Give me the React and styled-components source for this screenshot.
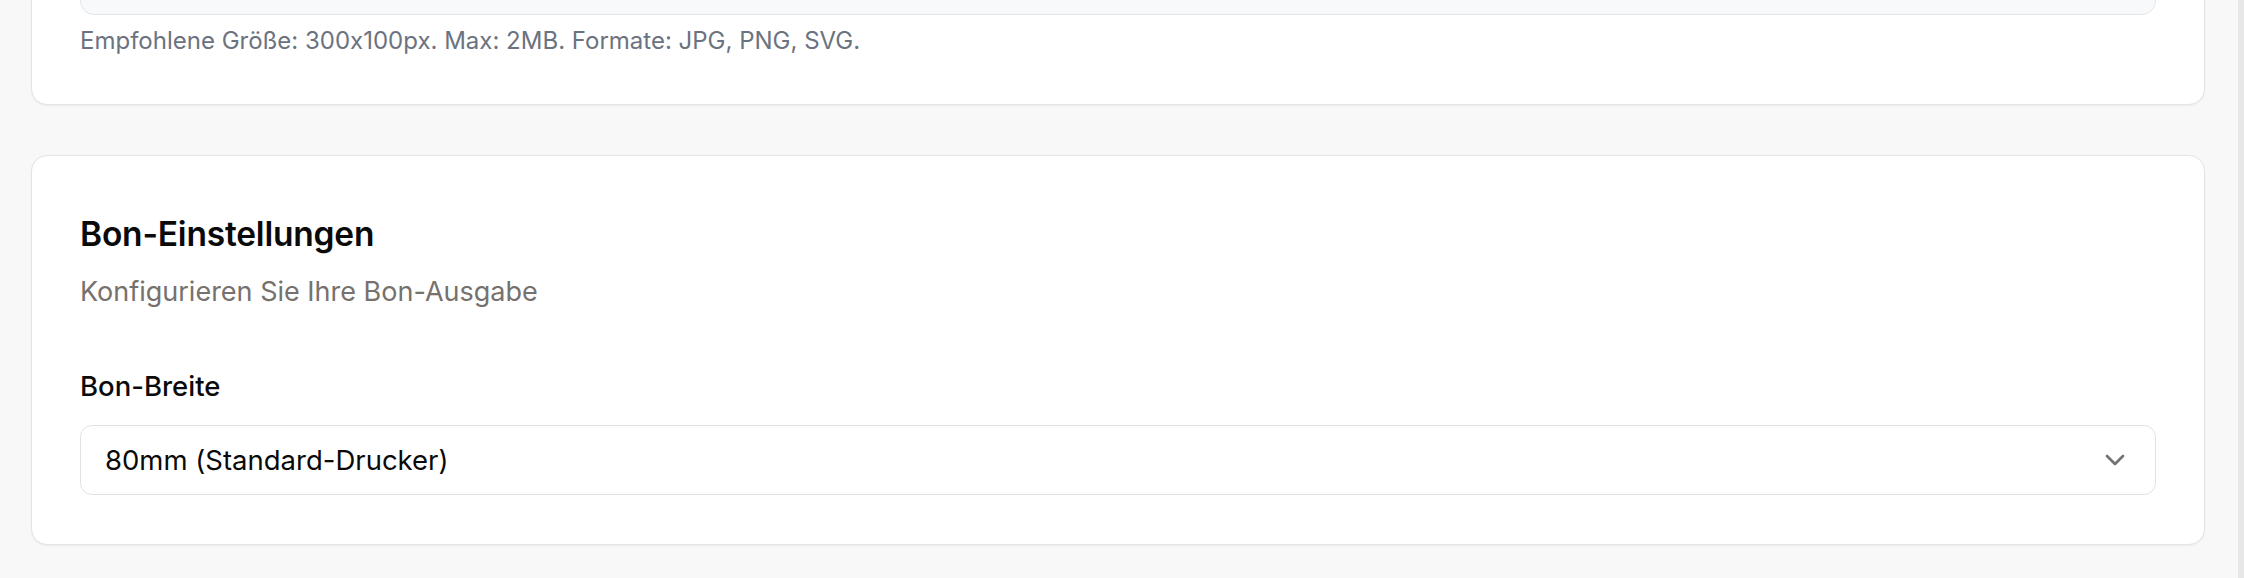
import React from "react";
import styled, { createGlobalStyle } from "styled-components";
import { ChevronDown } from "lucide-react";

const Global = createGlobalStyle`
  html, body { margin: 0; padding: 0; background: #f8f8f8; }
  body {
    font-family: Inter, "Noto Sans", "Liberation Sans", sans-serif;
    font-feature-settings: "calt" 0;
    overflow: hidden;
  }
  * { box-sizing: border-box; }
`;

const Viewport = styled.div`
  display: flex;
  height: 578px;
  overflow: hidden;
`;

const Main = styled.main`
  flex: 1;
  min-width: 0;
  padding: 0 33px 0 31px;
`;

const ScrollTrack = styled.div`
  width: 6px;
  flex: none;
  background: #e7e7e7;
`;

const Column = styled.div`
  display: flex;
  flex-direction: column;
  gap: 50px;
  margin-top: -154px;
`;

const Card = styled.section`
  background: #ffffff;
  border: 1px solid #e4e4e4;
  border-radius: 16px;
  box-shadow: 0 1px 2px rgba(0, 0, 0, 0.05);
  padding: ${(p) => p.$pad || "48px"};
  display: flex;
  flex-direction: column;
`;

const UploadBox = styled.div`
  height: 120px;
  background: #f8f9fb;
  border: 1px solid #e3e5e9;
  border-radius: 14px;
`;

const Hint = styled.p`
  margin: 10px 0 0;
  font-size: 24px;
  line-height: 31px;
  color: #6b7280;
`;

const Title = styled.h2`
  margin: 0;
  font-size: 33.5px;
  line-height: 40px;
  font-weight: 600;
  color: #0a0a0a;
  letter-spacing: -0.2px;
`;

const Subtitle = styled.p`
  margin: 20px 0 0;
  font-size: 27px;
  line-height: 36px;
  color: #77716d;
`;

const Field = styled.div`
  display: flex;
  flex-direction: column;
  gap: 21px;
  margin-top: 58px;
`;

const Label = styled.label`
  font-size: 27.5px;
  line-height: 36px;
  font-weight: 500;
  color: #0a0a0a;
`;

const Select = styled.div`
  height: 70px;
  display: flex;
  align-items: center;
  justify-content: space-between;
  padding: 0 24px;
  border: 1px solid #e2e2e2;
  border-radius: 12px;
  background: #ffffff;
`;

const SelectValue = styled.span`
  font-size: 27.5px;
  line-height: 34px;
  color: #0a0a0a;
`;

const Chevron = styled(ChevronDown)`
  color: #737373;
  flex: none;
`;

export default function App() {
  return (
    <>
      <Global />
      <Viewport>
        <Main>
          <Column>
            <Card>
              <UploadBox />
              <Hint>Empfohlene Größe: 300x100px. Max: 2MB. Formate: JPG, PNG, SVG.</Hint>
            </Card>
            <Card $pad="58px 48px 49px">
              <Title>Bon-Einstellungen</Title>
              <Subtitle>Konfigurieren Sie Ihre Bon-Ausgabe</Subtitle>
              <Field>
                <Label>Bon-Breite</Label>
                <Select>
                  <SelectValue>80mm (Standard-Drucker)</SelectValue>
                  <Chevron size={32} strokeWidth={2} />
                </Select>
              </Field>
            </Card>
          </Column>
        </Main>
        <ScrollTrack />
      </Viewport>
    </>
  );
}
